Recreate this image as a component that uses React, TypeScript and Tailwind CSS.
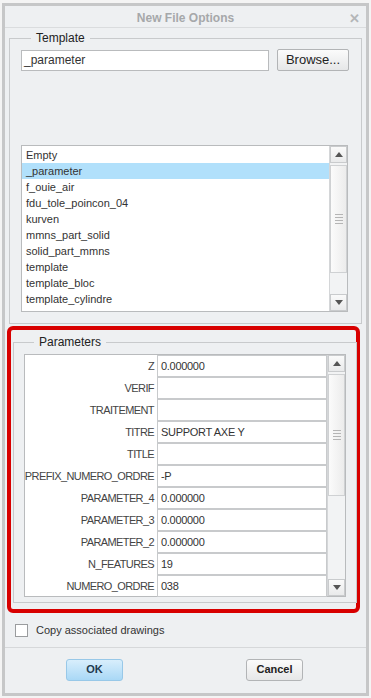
import { Check } from "lucide-react";

const templates = [
  "Empty",
  "_parameter",
  "f_ouie_air",
  "fdu_tole_poincon_04",
  "kurven",
  "mmns_part_solid",
  "solid_part_mmns",
  "template",
  "template_bloc",
  "template_cylindre",
];

const params: [string, string][] = [
  ["Z", "0.000000"],
  ["VERIF", ""],
  ["TRAITEMENT", ""],
  ["TITRE", "SUPPORT AXE Y"],
  ["TITLE", ""],
  ["PREFIX_NUMERO_ORDRE", "-P"],
  ["PARAMETER_4", "0.000000"],
  ["PARAMETER_3", "0.000000"],
  ["PARAMETER_2", "0.000000"],
  ["N_FEATURES", "19"],
  ["NUMERO_ORDRE", "038"],
];

function Arrow({ up }: { up?: boolean }) {
  return (
    <svg width="8" height="5" viewBox="0 0 8 5">
      <path d={up ? "M0 5 L4 0 L8 5 Z" : "M0 0 L4 5 L8 0 Z"} fill="#555" />
    </svg>
  );
}

function Scrollbar({ thumbTop, thumbHeight }: { thumbTop: number; thumbHeight: number }) {
  return (
    <div className="flex h-full w-[18px] flex-col border-l border-[#d4d6d8] bg-[#f2f3f4]">
      <div className="flex h-[17px] items-center justify-center border border-[#c9cbcd] bg-gradient-to-b from-[#fafafa] to-[#e9eaeb]">
        <Arrow up />
      </div>
      <div className="relative flex-1">
        <div
          className="absolute left-0 right-0 flex flex-col items-center justify-center gap-[2px] border border-[#cfd1d3] bg-gradient-to-r from-[#fbfbfb] to-[#ececec]"
          style={{ top: thumbTop, height: thumbHeight }}
        >
          <div className="h-px w-[8px] bg-[#b5b5b5]" />
          <div className="h-px w-[8px] bg-[#b5b5b5]" />
          <div className="h-px w-[8px] bg-[#b5b5b5]" />
          <div className="h-px w-[8px] bg-[#b5b5b5]" />
        </div>
      </div>
      <div className="flex h-[17px] items-center justify-center border border-[#c9cbcd] bg-gradient-to-b from-[#fafafa] to-[#e9eaeb]">
        <Arrow />
      </div>
    </div>
  );
}

export default function App() {
  return (
    <div
      className="h-[698px] w-[371px] bg-[#f4f4f4] pl-[2px] pt-[3px] text-[11px] text-[#333]"
      style={{ fontFamily: "'Liberation Sans', Arial, sans-serif" }}
    >
      <div className="flex h-[693px] w-[367px] flex-col border-[3px] border-[#c6c7c8] bg-[#eef0f2]">
        {/* title bar */}
        <div className="relative flex h-[22px] items-center justify-center border-b border-[#dadcde] pt-[2px]">
          <span className="text-[12px] font-bold text-[#a6a8aa]">New File Options</span>
          <span className="absolute right-[6px] top-[3px] text-[13px] font-bold text-[#b4b6b8]">✕</span>
        </div>

        {/* template */}
        <fieldset className="ml-[4px] mt-[1px] h-[295px] w-[353px] border border-[#c8cacc] px-[11px]">
          <legend className="ml-[10px] px-[5px] text-[12px] text-[#222]">Template</legend>
          <div className="mt-[2px] flex items-center">
            <div className="flex h-[21px] w-[248px] items-center border border-[#b9bbbd] bg-white px-[2px] text-[12px]">
              _parameter
            </div>
            <div className="ml-[8px] flex h-[22px] w-[72px] items-center justify-center rounded-[2px] border border-[#b2b4b6] bg-gradient-to-b from-[#fbfbfb] to-[#e6e7e8] text-[13px] text-[#222]">
              Browse...
            </div>
          </div>
          <div className="mt-[74px] flex h-[167px] w-[327px] border border-[#b9bbbd] bg-white">
            <div className="flex-1 pt-px">
              {templates.map((t) => (
                <div
                  key={t}
                  className={`flex h-[16px] items-center px-[4px] ${t === "_parameter" ? "bg-[#b1e0fb]" : ""}`}
                >
                  {t}
                </div>
              ))}
            </div>
            <Scrollbar thumbTop={2} thumbHeight={108} />
          </div>
        </fieldset>

        {/* parameters (highlighted) */}
        <div className="ml-[2px] mt-[2px] h-[287px] w-[353px] rounded-[6px] border-[4px] border-[#d80000] pl-[2px]">
          <fieldset className="mt-[3px] h-[270px] w-[341px] border border-[#c8cacc] px-[10px]">
            <legend className="ml-[10px] px-[5px] text-[12px] text-[#222]">Parameters</legend>
            <div className="mt-[3px] flex h-[243px] w-[322px] border border-[#b9bbbd] bg-white">
              <div className="flex-1">
                {params.map(([k, v]) => (
                  <div key={k} className="flex h-[22px]">
                    <div className="flex w-[132px] items-center justify-end pr-[3px] tracking-[-0.6px] text-[#444]">
                      {k}
                    </div>
                    <div className="flex w-[170px] items-center border border-[#c8cacc] bg-white pl-[3px] tracking-[-0.3px] text-[#333]">
                      {v}
                    </div>
                  </div>
                ))}
              </div>
              <Scrollbar thumbTop={2} thumbHeight={122} />
            </div>
          </fieldset>
        </div>

        {/* copy drawings */}
        <div className="ml-[10px] mt-[9px] flex items-center gap-[8px]">
          <div className="flex h-[13px] w-[13px] items-center justify-center border border-[#9a9c9e] bg-white">
            <Check className="hidden h-3 w-3" />
          </div>
          <span className="text-[#333]">Copy associated drawings</span>
        </div>

        <div className="mt-[8px] border-t border-[#d6d8da]" />

        {/* buttons */}
        <div className="mt-[11px] flex">
          <div className="ml-[61px] flex h-[22px] w-[57px] items-center justify-center rounded-[3px] border border-[#98c8e8] bg-gradient-to-b from-[#d8eefc] to-[#a9d8f6] font-bold text-[#1f3a50]">
            OK
          </div>
          <div className="ml-[123px] flex h-[22px] w-[57px] items-center justify-center rounded-[3px] border border-[#b2b4b6] bg-gradient-to-b from-[#fbfbfb] to-[#e6e7e8] font-bold text-[#222]">
            Cancel
          </div>
        </div>
      </div>
    </div>
  );
}
